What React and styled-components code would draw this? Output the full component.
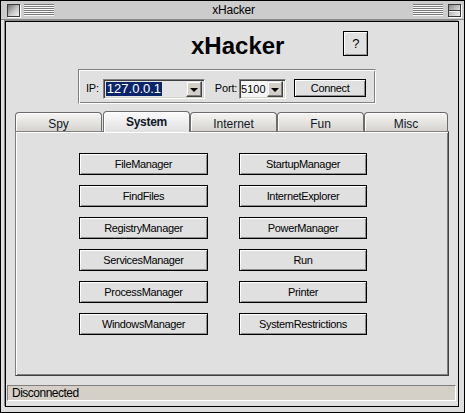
import React from 'react';
import styled, { createGlobalStyle } from 'styled-components';

const GlobalStyle = createGlobalStyle`
  html, body {
    margin: 0;
    padding: 0;
    background: #fff;
  }
  body {
    font-family: "Liberation Sans", Arial, sans-serif;
    color: #000;
  }
`;

const Window = styled.div`
  width: 465px;
  height: 413px;
  box-sizing: border-box;
  border: 1px solid #000;
  background: #dedede;
  display: flex;
  flex-direction: column;
`;

const TitleBar = styled.div`
  flex: none;
  height: 18px;
  background: #cccccc;
  border-bottom: 1px solid #8a8a8a;
  display: flex;
  align-items: center;
  padding: 0 3px;
`;

const WidgetBox = styled.span`
  flex: none;
  width: 13px;
  height: 13px;
  box-sizing: border-box;
  border: 1px solid #3a3a3a;
  background: linear-gradient(135deg, #707070, #c8c8c8 55%, #f0f0f0);
  box-shadow: 1px 1px 0 #fff;
  position: relative;
  margin-left: ${({ $left }) => $left || 0}px;

  ${({ $split }) =>
    $split &&
    `
    background: linear-gradient(135deg, #8a8a8a, #d0d0d0 60%, #f0f0f0);
    &::after {
      content: '';
      position: absolute;
      left: 0;
      right: 0;
      top: 5px;
      height: 1px;
      background: #3a3a3a;
      box-shadow: 0 1px 0 #f4f4f4;
    }
  `}
`;

const Stripes = styled.span`
  flex: none;
  width: 30px;
  height: 12px;
  margin-left: ${({ $left }) => $left || 0}px;
  background: repeating-linear-gradient(
    to bottom,
    #7a7a7a 0 1px,
    #fafafa 1px 2px
  );
`;

const TitleText = styled.span`
  flex: 1;
  text-align: center;
  font-size: 12px;
  letter-spacing: -0.2px;
  line-height: 18px;
`;

const Frame = styled.div`
  flex: 1;
  margin: 1px 5px 5px 4px;
  border: 1px solid #000;
  box-shadow: -1px -1px 0 #8a8a8a;
  background: #e0e0e0;
  display: flex;
  flex-direction: column;
  min-height: 0;
`;

const Header = styled.div`
  flex: none;
  height: 47px;
  display: flex;
  align-items: flex-start;
`;

const AppTitle = styled.h1`
  margin: 10px 0 0 185px;
  font-size: 24px;
  line-height: 28px;
  font-weight: bold;
`;

const HelpButton = styled.button`
  margin: 9px 0 0 59px;
  width: 25px;
  height: 25px;
  padding: 0;
  box-sizing: border-box;
  border: 1px solid #000;
  background: #e0e0e0;
  box-shadow: inset 1px 1px 0 #fff, inset -1px -1px 0 #9a9a9a;
  font-family: inherit;
  font-size: 13px;
  color: #000;
`;

const GroupBox = styled.div`
  flex: none;
  margin-left: 72px;
  width: 298px;
  height: 35px;
  box-sizing: border-box;
  border: 1px solid;
  border-color: #808080 #fff #fff #808080;
  box-shadow: inset 1px 1px 0 #fff, inset -1px -1px 0 #808080;
  display: flex;
  align-items: flex-start;
  padding: 9px 0 0 7px;
`;

const Label = styled.span`
  font-size: 11px;
  letter-spacing: -0.2px;
  line-height: 18px;
  margin-left: ${({ $left }) => $left || 0}px;
  margin-right: ${({ $right }) => $right || 0}px;
`;

const Combo = styled.div`
  flex: none;
  width: ${({ $width }) => $width}px;
  height: 20px;
  box-sizing: border-box;
  border: 1px solid;
  border-color: #808080 #fff #fff #808080;
  box-shadow: inset 1px 1px 0 #404040, inset -1px -1px 0 #d4d0c8;
  background: ${({ $bg }) => $bg};
  display: flex;
  align-items: center;
  padding: 0 2px 0 ${({ $pad }) => $pad ?? 2}px;
  font-size: ${({ $size }) => $size}px;
  line-height: 14px;
`;

const ComboValue = styled.span`
  flex: 1;
  white-space: nowrap;
  overflow: hidden;
`;

const Selected = styled.span`
  background: #0a246a;
  color: #fff;
  padding: 0 1px;
`;

const DropButton = styled.span`
  flex: none;
  width: 16px;
  height: 16px;
  box-sizing: border-box;
  border: 1px solid;
  border-color: #e8e8e8 #404040 #404040 #e8e8e8;
  box-shadow: inset -1px -1px 0 #808080, inset 1px 1px 0 #fff;
  background: #d4d0c8;
  display: flex;
  align-items: center;
  justify-content: center;

  &::after {
    content: '';
    border-left: 4px solid transparent;
    border-right: 4px solid transparent;
    border-top: 4px solid #000;
    margin-top: 1px;
  }
`;

const PushButton = styled.button`
  flex: none;
  width: ${({ $width }) => ($width ? `${$width}px` : 'auto')};
  height: ${({ $height }) => $height || 22}px;
  margin-left: ${({ $left }) => $left || 0}px;
  padding: 0;
  box-sizing: border-box;
  border: 1px solid #000;
  background: #e0e0e0;
  box-shadow: inset 1px 1px 0 #fff, inset -1px -1px 0 #8e8e8e;
  font-family: inherit;
  font-size: 11px;
  letter-spacing: -0.35px;
  color: #000;
`;

const Tabs = styled.div`
  flex: none;
  margin: 7px 0 0 9px;
  display: flex;
  flex-direction: column;
`;

const TabRow = styled.div`
  height: 20px;
  display: flex;
  align-items: flex-end;
`;

const Tab = styled.div`
  flex: none;
  width: ${({ $width }) => $width}px;
  margin-left: ${({ $left }) => $left || 0}px;
  height: ${({ $active }) => ($active ? 21 : 19)}px;
  margin-bottom: ${({ $active }) => ($active ? -1 : 0)}px;
  box-sizing: border-box;
  border: 1px solid #6c6c6c;
  border-bottom: none;
  border-radius: 4px 4px 0 0;
  background: ${({ $active }) =>
    $active
      ? 'linear-gradient(#fbfbfb, #e0e0e0)'
      : 'linear-gradient(#f6f5f3, #d6d3ce)'};
  box-shadow: inset 1px 1px 0 #fff;
  position: relative;
  z-index: ${({ $active }) => ($active ? 1 : 0)};
  text-align: center;
  padding-top: ${({ $active }) => ($active ? 2 : 3)}px;
  font-size: 12px;
  font-weight: ${({ $active }) => ($active ? 'bold' : 'normal')};
  letter-spacing: ${({ $active }) => ($active ? '-0.3px' : '0')};
  line-height: ${({ $active }) => ($active ? 17 : 16)}px;
  color: #101828;
`;

const Panel = styled.div`
  width: 434px;
  height: 245px;
  box-sizing: border-box;
  border: 1px solid;
  border-color: #808080 #404040 #404040 #808080;
  box-shadow: inset 1px 1px 0 #fff, inset -1px -1px 0 #808080;
  background: #e0e0e0;
  padding: 21px 0 0 63px;
`;

const ButtonGrid = styled.div`
  display: grid;
  grid-template-columns: 129px 128px;
  grid-auto-rows: 22px;
  column-gap: 31px;
  row-gap: 10px;
`;

const StatusBar = styled.div`
  flex: none;
  margin: 9px 2px 0 1px;
  height: 16px;
  box-sizing: border-box;
  border: 1px solid;
  border-color: #808080 #fff #fff #808080;
  background: #d4d0c8;
  padding-left: 4px;
  font-size: 12px;
  letter-spacing: -0.5px;
  line-height: 15px;
`;

const tabs = [
  { label: 'Spy', width: 87 },
  { label: 'System', width: 87, left: 1, active: true },
  { label: 'Internet', width: 87 },
  { label: 'Fun', width: 87 },
  { label: 'Misc', width: 84 },
];

const systemTools = [
  'FileManager',
  'StartupManager',
  'FindFiles',
  'InternetExplorer',
  'RegistryManager',
  'PowerManager',
  'ServicesManager',
  'Run',
  'ProcessManager',
  'Printer',
  'WindowsManager',
  'SystemRestrictions',
];

export default function App() {
  return (
    <>
      <GlobalStyle />
      <Window>
        <TitleBar>
          <WidgetBox $left={3} />
          <Stripes $left={4} />
          <TitleText>xHacker</TitleText>
          <Stripes />
          <WidgetBox $left={5} $split />
        </TitleBar>
        <Frame>
          <Header>
            <AppTitle>xHacker</AppTitle>
            <HelpButton>?</HelpButton>
          </Header>
          <GroupBox>
            <Label $right={4}>IP:</Label>
            <Combo $width={102} $bg="#e4e4e4" $size={13}>
              <ComboValue>
                <Selected>127.0.0.1</Selected>
              </ComboValue>
              <DropButton />
            </Combo>
            <Label $left={10} $right={2}>Port:</Label>
            <Combo $width={47} $bg="#f6f6f6" $size={11} $pad={1}>
              <ComboValue>5100</ComboValue>
              <DropButton />
            </Combo>
            <PushButton $width={72} $height={18} $left={8}>
              Connect
            </PushButton>
          </GroupBox>
          <Tabs>
            <TabRow>
              {tabs.map((t) => (
                <Tab key={t.label} $width={t.width} $left={t.left} $active={t.active}>
                  {t.label}
                </Tab>
              ))}
            </TabRow>
            <Panel>
              <ButtonGrid>
                {systemTools.map((name) => (
                  <PushButton key={name}>{name}</PushButton>
                ))}
              </ButtonGrid>
            </Panel>
          </Tabs>
          <StatusBar>Disconnected</StatusBar>
        </Frame>
      </Window>
    </>
  );
}
